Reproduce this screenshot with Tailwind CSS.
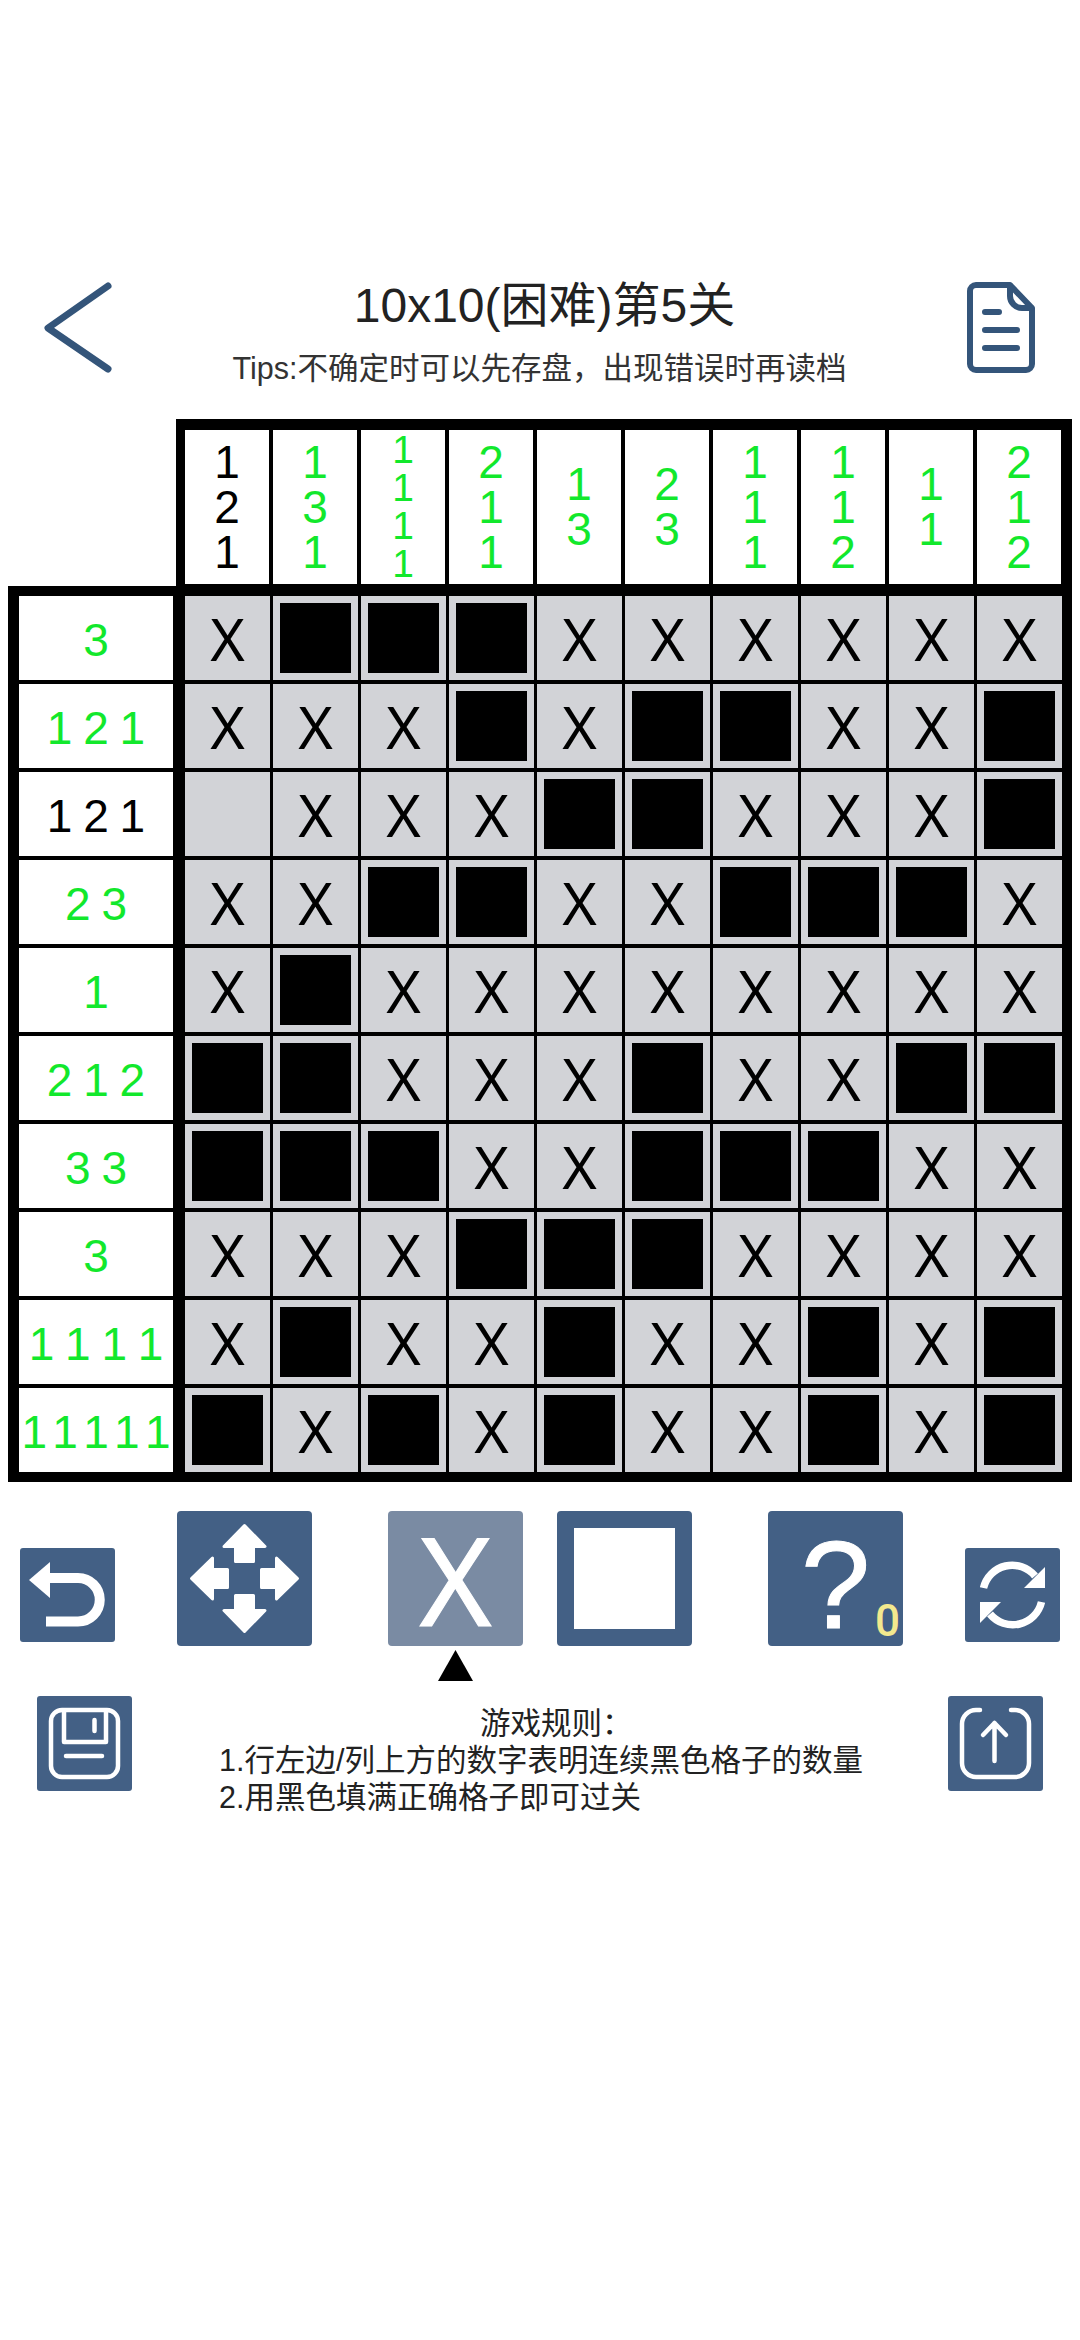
<!DOCTYPE html>
<html lang="zh-CN">
  <head>
    <meta charset="UTF-8" />
    <meta name="viewport" content="width=device-width, initial-scale=1" />
    <title>10x10(困难)第5关</title>
    <script src="https://cdn.jsdelivr.net/npm/@tailwindcss/browser@4"></script>
  </head>
  <body class="bg-white font-['Liberation_Sans','Noto_Sans_CJK_SC',sans-serif]">

    <!-- Header -->
    <header class="flex items-start pt-[278px]">
      <svg class="mt-[4px] ml-[44px] w-[68px] h-[91px] shrink-0" viewBox="0 0 68 91" fill="none" stroke="#34557a" stroke-width="7" stroke-linecap="round" stroke-linejoin="round">
        <path d="M64 4 L4 46 L64 87" />
      </svg>
      <div class="flex-1 text-center">
        <h1 class="pl-[10px] h-[56px] text-[48px] leading-[56px] font-normal text-[#222]">10x10(困难)第5关</h1>
        <p class="mt-[14px] h-[40px] text-[30.5px] leading-[40px] whitespace-nowrap text-[#333]">Tips:不确定时可以先存盘，出现错误时再读档</p>
      </div>
      <svg class="mt-[4px] mr-[45px] w-[68px] h-[91px] shrink-0" viewBox="0 0 68 91" fill="none" stroke="#34557a" stroke-width="6" stroke-linecap="round" stroke-linejoin="round">
        <path d="M9 3 H43 L65 26 V82 A6 6 0 0 1 59 88 H9 A6 6 0 0 1 3 82 V9 A6 6 0 0 1 9 3 Z" />
        <path d="M43 4 V14 A12 12 0 0 0 55 26 H64" />
        <path d="M18 30 H32 M18 48 H50 M18 66 H50" />
      </svg>
    </header>

    <!-- Board -->
    <section class="mt-[31px]">
      <div id="col-clues" class="ml-[176px] w-[896px] h-[167px] bg-black pt-[11px] pl-[9px] flex gap-[4px]"></div>
      <div class="ml-[8px] w-[1064px] bg-black p-[10px] pl-[11px] flex gap-[12px]">
        <div id="row-clues" class="w-[154px] flex flex-col gap-[4px]"></div>
        <div id="cells" class="grid grid-cols-[repeat(10,85px)] auto-rows-[84px] gap-x-[3px] gap-y-[4px]"></div>
      </div>
    </section>

    <!-- Tools -->
    <section class="mt-[29px] pl-[20px] flex items-start">
      <button class="mt-[37px] w-[95px] h-[94px] rounded-[3px] bg-[#436085]">
        <svg class="w-full h-full" viewBox="0 0 95 94" fill="none" stroke="#fff" stroke-width="10">
          <path d="M30 30 H58 A21.75 21.75 0 0 1 58 73.5 H26" />
          <path d="M30 14 V50 L9 32 Z" fill="#fff" stroke="none" />
        </svg>
      </button>
      <button class="ml-[62px] w-[135px] h-[135px] rounded-[4px] bg-[#436085]">
        <svg class="w-full h-full" viewBox="0 0 135 135" fill="#fff" stroke="#fff" stroke-width="3" stroke-linejoin="round">
          <path d="M67.5 14.5 L88 35.5 H76.5 V50.5 H58.5 V35.5 H47 Z" />
          <path transform="rotate(90 67.5 67.5)" d="M67.5 14.5 L88 35.5 H76.5 V50.5 H58.5 V35.5 H47 Z" />
          <path transform="rotate(180 67.5 67.5)" d="M67.5 14.5 L88 35.5 H76.5 V50.5 H58.5 V35.5 H47 Z" />
          <path transform="rotate(270 67.5 67.5)" d="M67.5 14.5 L88 35.5 H76.5 V50.5 H58.5 V35.5 H47 Z" />
        </svg>
      </button>
      <button class="relative ml-[76px] w-[135px] h-[135px] rounded-[4px] bg-[#7a8ba3] flex items-center justify-center text-white text-[123px] leading-none font-['Noto_Sans',sans-serif] [-webkit-text-stroke:1px_white]">
        X
        <svg class="absolute top-full left-[50px] mt-[4px] w-[35px] h-[31px]" viewBox="0 0 35 31"><path d="M17.5 0 L35 31 H0 Z" fill="#000" /></svg>
      </button>
      <button class="ml-[34px] w-[135px] h-[135px] rounded-[4px] bg-white border-[17px] border-[#436085]"></button>
      <button class="relative ml-[76px] w-[135px] h-[135px] rounded-[4px] bg-[#436085] flex items-center justify-center pt-[12px] text-white text-[125px] leading-none [-webkit-text-stroke:1px_white]">
        ?
        <span class="absolute right-[3px] bottom-[3px] text-[44px] leading-none font-medium text-[#f3e98e] font-['Roboto',sans-serif] [-webkit-text-stroke:0]">0</span>
      </button>
      <button class="ml-[62px] mt-[37px] w-[95px] h-[94px] rounded-[3px] bg-[#436085]">
        <svg class="w-full h-full" viewBox="0 0 95 94" fill="none" stroke="#fff" stroke-width="7.5">
          <path d="M18.5 40 A29.5 29.5 0 0 1 70 28" />
          <path d="M80 19 V40 H59 Z" fill="#fff" stroke="none" />
          <g transform="rotate(180 47.5 47)">
            <path d="M18.5 40 A29.5 29.5 0 0 1 70 28" />
            <path d="M80 19 V40 H59 Z" fill="#fff" stroke="none" />
          </g>
        </svg>
      </button>
    </section>

    <!-- Rules + save / load -->
    <section class="mt-[50px] px-[37px] flex items-start">
      <button class="w-[95px] h-[95px] shrink-0 rounded-[3px] bg-[#436085]">
        <svg class="w-full h-full" viewBox="0 0 95 95" fill="none" stroke="#fff" stroke-width="4.5" stroke-linecap="round" stroke-linejoin="round">
          <rect x="14" y="14" width="67" height="67" rx="11" />
          <path d="M27 15 V46 H69 V15" />
          <path d="M57.5 24 V35" />
          <path d="M29 60 H65" />
        </svg>
      </button>
      <div class="ml-[87px] w-[660px] pt-[9px] text-[30.5px] leading-[37px] text-[#222]">
        <p class="pl-[261px]">游戏规则：</p>
        <p>1.行左边/列上方的数字表明连续黑色格子的数量</p>
        <p>2.用黑色填满正确格子即可过关</p>
      </div>
      <button class="ml-auto w-[95px] h-[95px] shrink-0 rounded-[3px] bg-[#436085]">
        <svg class="w-full h-full" viewBox="0 0 95 95" fill="none" stroke="#fff" stroke-width="4.5" stroke-linecap="round" stroke-linejoin="round">
          <path d="M32 14 H28 A14 14 0 0 0 14 28 V67 A14 14 0 0 0 28 81 H67 A14 14 0 0 0 81 67 V28 A14 14 0 0 0 67 14 H63" />
          <path d="M46.5 65 V27 M35 39 L46.5 27 L58 39" />
        </svg>
      </button>
    </section>

    <script>
      // Clues: done = black text, otherwise green
      const colClues = [
        { n: [1, 2, 1], done: true }, { n: [1, 3, 1] }, { n: [1, 1, 1, 1] }, { n: [2, 1, 1] }, { n: [1, 3] },
        { n: [2, 3] }, { n: [1, 1, 1] }, { n: [1, 1, 2] }, { n: [1, 1] }, { n: [2, 1, 2] },
      ];
      const rowClues = [
        { t: '3' }, { t: '1 2 1' }, { t: '1 2 1', done: true }, { t: '2 3' }, { t: '1' },
        { t: '2 1 2' }, { t: '3 3' }, { t: '3' }, { t: '1 1 1 1' }, { t: '1 1 1 1 1' },
      ];
      const board = [
        'XBBBXXXXXX',
        'XXXBXBBXXB',
        '.XXXBBXXXB',
        'XXBBXXBBBX',
        'XBXXXXXXXX',
        'BBXXXBXXBB',
        'BBBXXBBBXX',
        'XXXBBBXXXX',
        'XBXXBXXBXB',
        'BXBXBXXBXB',
      ];

      document.getElementById('col-clues').innerHTML = colClues.map(c => {
        const size = c.n.length === 4 ? 'text-[39px] leading-[38px]' : 'text-[46px] leading-[45px]';
        const color = c.done ? 'text-black' : 'text-[#12e82c]';
        return `<div class="w-[84px] h-[154px] bg-white flex flex-col items-center justify-center ${size} ${color}">${c.n.map(d => `<span>${d}</span>`).join('')}</div>`;
      }).join('');

      document.getElementById('row-clues').innerHTML = rowClues.map(r => {
        const color = r.done ? 'text-black' : 'text-[#12e82c]';
        const squeeze = r.t.length === 9 ? '[word-spacing:-7.5px]' : '[word-spacing:-2px]';
        return `<div class="h-[84px] pt-[5px] bg-white flex items-center justify-center whitespace-nowrap text-[46px] ${squeeze} ${color}">${r.t}</div>`;
      }).join('');

      document.getElementById('cells').innerHTML = board.join('').split('').map(v => {
        if (v === 'B') return '<div class="bg-[#d2d3d7] flex items-center justify-center"><div class="w-[71px] h-[70px] bg-black"></div></div>';
        if (v === 'X') return '<div class="bg-[#d2d3d7] flex items-center justify-center text-[59px] leading-none text-black font-[\'Noto_Sans\',sans-serif]">X</div>';
        return '<div class="bg-[#d2d3d7]"></div>';
      }).join('');
    </script>

  </body>
</html>
